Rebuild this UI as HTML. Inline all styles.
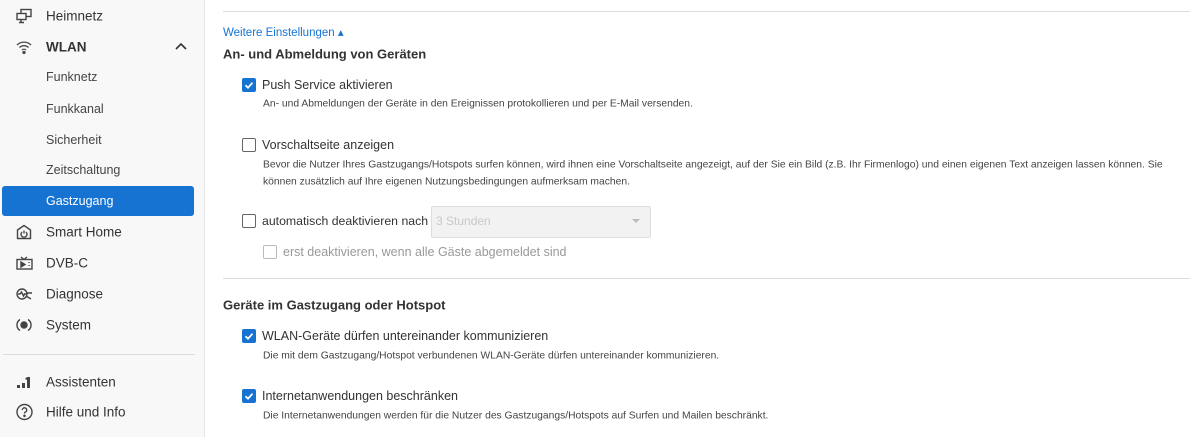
<!DOCTYPE html><html><head><meta charset="utf-8"><style>
body{margin:0;width:1200px;height:437px;overflow:hidden;font-family:"Liberation Sans",sans-serif;background:#fff;color:#333;position:relative}
.sb{position:absolute;left:0;top:0;width:204px;height:437px;background:#f8f8f8;border-right:1px solid #e6e6e6}
.t{position:absolute;white-space:nowrap;transform:translateY(-50%)}
.m{font-size:13.5px;color:#333;left:46px}
.s{font-size:12.5px;color:#444;left:46px}
.ic{position:absolute;left:16px;transform:translateY(-50%)}
.cb{position:absolute;width:12px;height:12px;border:1.5px solid #666;border-radius:2px;background:#fff;transform:translateY(-50%)}
.cb.on{background:#1673d2;border-color:#1673d2}
.lab{font-size:12.5px;color:#333}
.d{font-size:10.3px;color:#444}
.h{font-size:13px;font-weight:bold;color:#333}
</style></head><body>
<div class="sb">
<svg class="ic" style="top:16px" width="16" height="15" viewBox="0 0 16 15" fill="none" stroke="#444" stroke-width="1.4"><rect x="5" y="1" width="10" height="7"/><rect x="1" y="5" width="9" height="6" fill="#f8f8f8"/><path d="M5 11v3M3 14h5"/></svg>
<div class="t m" style="top:16px">Heimnetz</div>
<svg class="ic" style="top:47px" width="16" height="14" viewBox="0 0 16 14" fill="none" stroke="#444" stroke-width="1.3"><path d="M1 5a10 10 0 0 1 14 0M3.5 7.5a6.5 6.5 0 0 1 9 0M6 10a3 3 0 0 1 4 0"/><circle cx="8" cy="12.5" r="1" fill="#444"/></svg>
<div class="t m" style="top:47px;font-weight:bold">WLAN</div>
<svg style="position:absolute;left:175px;top:42px" width="12" height="8" viewBox="0 0 12 8" fill="none" stroke="#333" stroke-width="1.6"><path d="M1 7l5-5 5 5"/></svg>
<div class="t s" style="top:77px">Funknetz</div>
<div class="t s" style="top:109px">Funkkanal</div>
<div class="t s" style="top:140px">Sicherheit</div>
<div class="t s" style="top:170px">Zeitschaltung</div>
<div style="position:absolute;left:2px;top:186px;width:192px;height:30px;background:#1673d2;border-radius:3px"></div>
<div class="t s" style="top:201px;color:#fff">Gastzugang</div>
<svg class="ic" style="top:232px" width="16" height="16" viewBox="0 0 16 16" fill="none" stroke="#444" stroke-width="1.4"><path d="M1.5 6L8 1.5 14.5 6v8.5h-13z"/><path d="M6 8a3 3 0 1 0 4 0M8 6.5v3"/></svg>
<div class="t m" style="top:232px">Smart Home</div>
<svg class="ic" style="top:263px" width="17" height="14" viewBox="0 0 17 14" fill="none" stroke="#444" stroke-width="1.4"><rect x="1" y="3.5" width="15" height="9.5"/><path d="M5 1l3 2.5L11 1"/><path d="M5 6v5l4-2.5z" fill="#444"/><path d="M13 6v1M13 9v1"/></svg>
<div class="t m" style="top:263px">DVB-C</div>
<svg class="ic" style="top:294px" width="17" height="14" viewBox="0 0 17 14" fill="none" stroke="#444" stroke-width="1.4"><circle cx="6" cy="7" r="5"/><path d="M2 7h2l1.5-2 2 4 1-2h2M10 9l5 3M11 6h5"/></svg>
<div class="t m" style="top:294px">Diagnose</div>
<svg class="ic" style="top:325px" width="16" height="16" viewBox="0 0 16 16" fill="none" stroke="#444" stroke-width="1.4"><path d="M4 2.5a6.5 6.5 0 0 0 0 11M12 2.5a6.5 6.5 0 0 1 0 11"/><circle cx="8" cy="8" r="3" fill="#444"/></svg>
<div class="t m" style="top:325px">System</div>
<div style="position:absolute;left:3px;top:354px;width:192px;height:1px;background:#ddd"></div>
<svg class="ic" style="top:382px" width="16" height="14" viewBox="0 0 16 14" fill="#444"><rect x="1" y="10" width="3" height="3"/><rect x="6" y="8" width="3" height="5"/><rect x="11" y="2" width="3" height="11"/><path d="M9 4l2-2v3z"/></svg>
<div class="t m" style="top:382px">Assistenten</div>
<svg class="ic" style="top:412px" width="17" height="17" viewBox="0 0 17 17" fill="none" stroke="#444" stroke-width="1.4"><circle cx="8.5" cy="8.5" r="7.5"/><path d="M6.3 6.5a2.2 2.2 0 1 1 2.9 2.1c-.6.3-.7.7-.7 1.4"/><circle cx="8.5" cy="12.3" r=".6" fill="#444"/></svg>
<div class="t m" style="top:412px">Hilfe und Info</div>
</div>

<div style="position:absolute;left:223px;top:11px;width:967px;height:1px;background:#ddd"></div>
<div class="t" style="left:223px;top:32px;font-size:11.5px;color:#1673d2">Weitere Einstellungen ▴</div>
<div class="t h" style="left:223px;top:54px">An- und Abmeldung von Geräten</div>

<div class="cb on" style="left:242px;top:85px"><svg width="12" height="12" viewBox="0 0 12 12" style="display:block"><path d="M2.5 6.2l2.5 2.5 4.5-5" fill="none" stroke="#fff" stroke-width="1.8"/></svg></div>
<div class="t lab" style="left:262px;top:85px">Push Service aktivieren</div>
<div class="t d" style="left:263px;top:104px">An- und Abmeldungen der Geräte in den Ereignissen protokollieren und per E-Mail versenden.</div>

<div class="cb" style="left:242px;top:145px"></div>
<div class="t lab" style="left:262px;top:145px">Vorschaltseite anzeigen</div>
<div class="t d" style="left:263px;top:165px">Bevor die Nutzer Ihres Gastzugangs/Hotspots surfen können, wird ihnen eine Vorschaltseite angezeigt, auf der Sie ein Bild (z.B. Ihr Firmenlogo) und einen eigenen Text anzeigen lassen können. Sie</div>
<div class="t d" style="left:263px;top:182px">können zusätzlich auf Ihre eigenen Nutzungsbedingungen aufmerksam machen.</div>

<div class="cb" style="left:242px;top:221px"></div>
<div class="t lab" style="left:262px;top:221px;font-size:12.3px">automatisch deaktivieren nach</div>
<div style="position:absolute;left:431px;top:206px;width:218px;height:30px;background:#f2f2f2;border:1px solid #ddd;border-radius:2px"></div>
<div class="t" style="left:436px;top:221px;font-size:12px;color:#c8c8c8">3 Stunden</div>
<div style="position:absolute;left:632px;top:219px;border-left:4px solid transparent;border-right:4px solid transparent;border-top:4px solid #bbb"></div>

<div class="cb" style="left:263px;top:252px;border-color:#bbb"></div>
<div class="t lab" style="left:283px;top:252px;color:#999">erst deaktivieren, wenn alle Gäste abgemeldet sind</div>

<div style="position:absolute;left:223px;top:278px;width:967px;height:1px;background:#ddd"></div>
<div class="t h" style="left:223px;top:305px">Geräte im Gastzugang oder Hotspot</div>

<div class="cb on" style="left:242px;top:336px"><svg width="12" height="12" viewBox="0 0 12 12" style="display:block"><path d="M2.5 6.2l2.5 2.5 4.5-5" fill="none" stroke="#fff" stroke-width="1.8"/></svg></div>
<div class="t lab" style="left:262px;top:336px">WLAN-Geräte dürfen untereinander kommunizieren</div>
<div class="t d" style="left:263px;top:356px">Die mit dem Gastzugang/Hotspot verbundenen WLAN-Geräte dürfen untereinander kommunizieren.</div>

<div class="cb on" style="left:242px;top:396px"><svg width="12" height="12" viewBox="0 0 12 12" style="display:block"><path d="M2.5 6.2l2.5 2.5 4.5-5" fill="none" stroke="#fff" stroke-width="1.8"/></svg></div>
<div class="t lab" style="left:262px;top:396px">Internetanwendungen beschränken</div>
<div class="t d" style="left:263px;top:416px">Die Internetanwendungen werden für die Nutzer des Gastzugangs/Hotspots auf Surfen und Mailen beschränkt.</div>
</body></html>
